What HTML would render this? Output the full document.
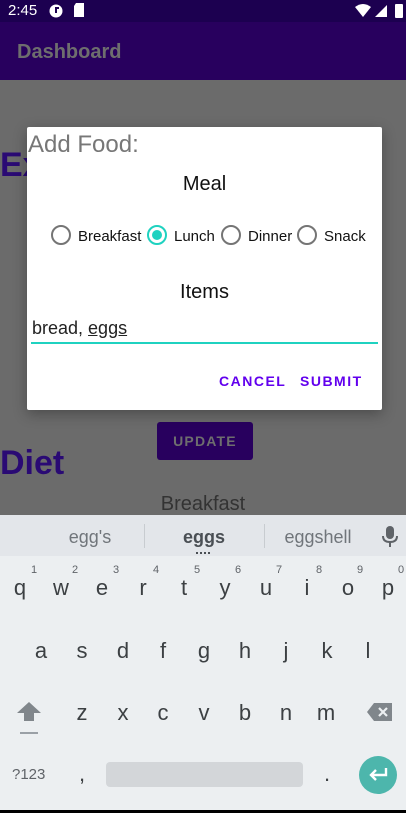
<!DOCTYPE html>
<html><head><meta charset="utf-8"><style>
*{margin:0;padding:0;box-sizing:border-box}
body{width:406px;height:813px;overflow:hidden;position:relative;font-family:"Liberation Sans",sans-serif;background:#6b6b6b}
.a{position:absolute}
.k{position:absolute;font-size:22px;color:#3c4043;transform:translateX(-50%);line-height:1}
.n{position:absolute;font-size:11px;color:#5f6368;transform:translateX(-50%)}
</style></head><body>
<div class="a" style="left:0;top:0;width:406px;height:22px;background:#1c0050"></div>
<div class="a" style="left:8px;top:2px;color:#fff;font-size:15px">2:45</div>
<svg class="a" style="left:49px;top:4px" width="14" height="14"><circle cx="7" cy="7" r="6.5" fill="#fff"/><rect x="6" y="3" width="2" height="6" fill="#1c0050"/><rect x="8" y="3" width="2" height="2" fill="#1c0050"/></svg>
<svg class="a" style="left:73px;top:3px" width="12" height="14"><path d="M3 0H11V14H1V3Z" fill="#fff"/></svg>
<svg class="a" style="left:355px;top:3px" width="50" height="16"><path d="M0 4Q8 -2 16 4L8 14Z" fill="#fff"/><path d="M32 2V14H20Z" fill="#fff"/><rect x="40" y="1" width="8" height="14" rx="1" fill="#fff"/></svg>
<div class="a" style="left:0;top:22px;width:406px;height:58px;background:#28005e"></div>
<div class="a" style="left:17px;top:41px;color:#6e6e6e;font-size:20px;font-weight:bold">Dashboard</div>
<div class="a" style="left:0;top:146px;color:#2a0a74;font-size:34px;font-weight:bold">Ex</div>
<div class="a" style="left:0;top:444px;color:#2a0a74;font-size:34px;font-weight:bold">Diet</div>
<div class="a" style="left:157px;top:422px;width:96px;height:38px;background:#28005e;border-radius:3px;color:#6e6e6e;font-size:14px;letter-spacing:1.2px;text-align:center;line-height:39px;font-weight:bold">UPDATE</div>
<div class="a" style="left:0;top:493px;width:406px;text-align:center;color:#333;font-size:20px">Breakfast</div>
<div class="a" style="left:27px;top:127px;width:355px;height:283px;background:#fff;border-radius:2px;box-shadow:0 4px 14px rgba(0,0,0,.3)"></div>
<div class="a" style="left:28px;top:131px;color:#777;font-size:24px">Add Food:</div>
<div class="a" style="left:27px;top:173px;width:355px;text-align:center;font-size:20px;color:#111">Meal</div>
<svg class="a" style="left:40px;top:222px" width="340" height="28" font-family="Liberation Sans" font-size="15" fill="#111">
<circle cx="21" cy="13" r="9" fill="none" stroke="#757575" stroke-width="2"/>
<text x="38" y="19">Breakfast</text>
<circle cx="117" cy="13" r="9" fill="none" stroke="#1fd2c0" stroke-width="2"/><circle cx="117" cy="13" r="5" fill="#1fd2c0"/>
<text x="134" y="19">Lunch</text>
<circle cx="191" cy="13" r="9" fill="none" stroke="#757575" stroke-width="2"/>
<text x="208" y="19">Dinner</text>
<circle cx="267" cy="13" r="9" fill="none" stroke="#757575" stroke-width="2"/>
<text x="284" y="19">Snack</text>
</svg>
<div class="a" style="left:27px;top:281px;width:355px;text-align:center;font-size:20px;color:#111">Items</div>
<div class="a" style="left:32px;top:318px;font-size:18px;color:#222">bread, <span style="text-decoration:underline">eggs</span></div>
<div class="a" style="left:31px;top:342px;width:347px;height:2px;background:#1fd2c0"></div>
<div class="a" style="left:219px;top:373px;color:#6200ee;font-size:14px;font-weight:bold;letter-spacing:1.5px">CANCEL</div>
<div class="a" style="left:300px;top:373px;color:#6200ee;font-size:14px;font-weight:bold;letter-spacing:1.5px">SUBMIT</div>
<div class="a" style="left:0;top:515px;width:406px;height:295px;background:#eceff1"></div>
<div class="a" style="left:0;top:515px;width:406px;height:41px;background:#e3e6ea"></div>
<div class="a" style="left:144px;top:524px;width:1px;height:24px;background:#c8ccd0"></div>
<div class="a" style="left:264px;top:524px;width:1px;height:24px;background:#c8ccd0"></div>
<div class="a" style="left:90px;top:527px;transform:translateX(-50%);color:#70757a;font-size:18px">egg's</div>
<div class="a" style="left:204px;top:527px;transform:translateX(-50%);color:#4a4f54;font-size:18px;font-weight:bold">eggs</div>
<div class="a" style="left:196px;top:552px;width:14px;height:3px;border-top:2px dotted #4a4f54"></div>
<div class="a" style="left:318px;top:527px;transform:translateX(-50%);color:#70757a;font-size:18px">eggshell</div>
<svg class="a" style="left:382px;top:526px" width="16" height="22"><rect x="4" y="0" width="8" height="13" rx="4" fill="#5f6368"/><path d="M1 10Q1 16 8 16Q15 16 15 10" fill="none" stroke="#5f6368" stroke-width="2"/><rect x="7" y="16" width="2" height="5" fill="#5f6368"/></svg>
<div class="n" style="left:34px;top:564px">1</div><div class="n" style="left:75px;top:564px">2</div><div class="n" style="left:116px;top:564px">3</div><div class="n" style="left:156px;top:564px">4</div><div class="n" style="left:197px;top:564px">5</div><div class="n" style="left:238px;top:564px">6</div><div class="n" style="left:279px;top:564px">7</div><div class="n" style="left:319px;top:564px">8</div><div class="n" style="left:360px;top:564px">9</div><div class="n" style="left:401px;top:564px">0</div>
<div class="k" style="left:20px;top:577px">q</div><div class="k" style="left:61px;top:577px">w</div><div class="k" style="left:102px;top:577px">e</div><div class="k" style="left:143px;top:577px">r</div><div class="k" style="left:184px;top:577px">t</div><div class="k" style="left:225px;top:577px">y</div><div class="k" style="left:266px;top:577px">u</div><div class="k" style="left:307px;top:577px">i</div><div class="k" style="left:348px;top:577px">o</div><div class="k" style="left:388px;top:577px">p</div>
<div class="k" style="left:41px;top:640px">a</div><div class="k" style="left:82px;top:640px">s</div><div class="k" style="left:123px;top:640px">d</div><div class="k" style="left:163px;top:640px">f</div><div class="k" style="left:204px;top:640px">g</div><div class="k" style="left:245px;top:640px">h</div><div class="k" style="left:286px;top:640px">j</div><div class="k" style="left:327px;top:640px">k</div><div class="k" style="left:368px;top:640px">l</div>
<div class="k" style="left:82px;top:702px">z</div><div class="k" style="left:123px;top:702px">x</div><div class="k" style="left:163px;top:702px">c</div><div class="k" style="left:204px;top:702px">v</div><div class="k" style="left:245px;top:702px">b</div><div class="k" style="left:286px;top:702px">n</div><div class="k" style="left:326px;top:702px">m</div>
<svg class="a" style="left:16px;top:701px" width="26" height="34"><path d="M13 1L25 12H18V20H8V12H1Z" fill="#80868b"/><rect x="4" y="31" width="18" height="2" fill="#9aa0a6"/></svg>
<svg class="a" style="left:367px;top:702px" width="26" height="20"><path d="M7 1H25V19H7L0 10Z" fill="#80868b"/><path d="M12 6L20 14M20 6L12 14" stroke="#eceff1" stroke-width="2.2"/></svg>
<div class="a" style="left:12px;top:766px;color:#5f6368;font-size:15px">?123</div>
<div class="k" style="left:82px;top:763px">,</div>
<div class="a" style="left:106px;top:762px;width:197px;height:25px;background:#d3d6d9;border-radius:4px"></div>
<div class="k" style="left:327px;top:763px">.</div>
<div class="a" style="left:359px;top:756px;width:38px;height:38px;border-radius:50%;background:#4db6ac"></div>
<svg class="a" style="left:366px;top:765px" width="24" height="20"><path d="M20 3V10H5M10 5L5 10L10 15" fill="none" stroke="#fff" stroke-width="2.4"/></svg>
<div class="a" style="left:0;top:810px;width:406px;height:3px;background:#000"></div>
</body></html>
